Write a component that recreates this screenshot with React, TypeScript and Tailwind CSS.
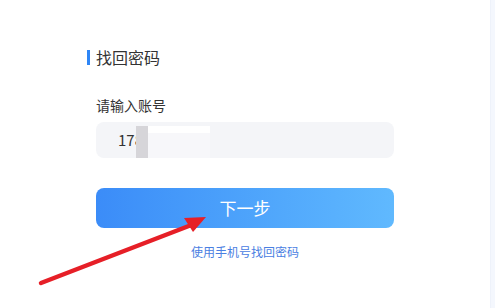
import React from "react";

const font = { fontFamily: '"Microsoft YaHei", "Noto Sans CJK SC", sans-serif' };

function Arrow() {
  return (
    <svg className="absolute left-0 top-0 pointer-events-none" width="495" height="308" viewBox="0 0 495 308">
      <line x1="41" y1="283" x2="194" y2="224" stroke="#e61f27" strokeWidth="4.5" strokeLinecap="round" />
      <polygon points="206,217 184,218 193,232" fill="#e61f27" />
    </svg>
  );
}

export default function App() {
  return (
    <div className="relative w-[495px] h-[308px] bg-white overflow-hidden flex" style={font}>
      <div className="flex-1 flex flex-col pt-[48px] pl-[87px]">
        <div className="flex items-center h-[18px]">
          <span className="w-[3px] h-[15px] bg-[#2f86f6]" />
          <span className="ml-[6px] text-[16px] text-[#333]">找回密码</span>
        </div>
        <div className="mt-[29px] pl-[9px] text-[14px] text-[#333] leading-[20px]">请输入账号</div>
        <div className="mt-[7px] ml-[9px] w-[298px] h-[36px] rounded-[8px] bg-[#f4f5f8] flex items-center relative">
          <span className="ml-[22px] text-[15px] text-[#333]">178</span>
          <span className="absolute left-[40px] top-[4px] w-[12px] h-[32px] bg-[#d6d5d9]" />
          <span className="absolute left-[52px] top-[4px] w-[62px] h-[7px] bg-white" />
          <span className="absolute left-[52px] top-[11px] w-[62px] h-[25px] bg-[#f7f7fa]" />
        </div>
        <button className="mt-[30px] ml-[9px] w-[298px] h-[40px] rounded-[8px] bg-gradient-to-r from-[#3b8cf8] to-[#60b9fe] text-white text-[17px] flex items-center justify-center">
          下一步
        </button>
        <div className="mt-[15px] ml-[9px] w-[298px] text-center text-[12px] leading-[18px] text-[#4a80e2]">使用手机号找回密码</div>
      </div>
      <div className="w-[5px] h-full bg-[#f4f7fd] border-l border-[#eef2fa]" />
      <Arrow />
    </div>
  );
}
